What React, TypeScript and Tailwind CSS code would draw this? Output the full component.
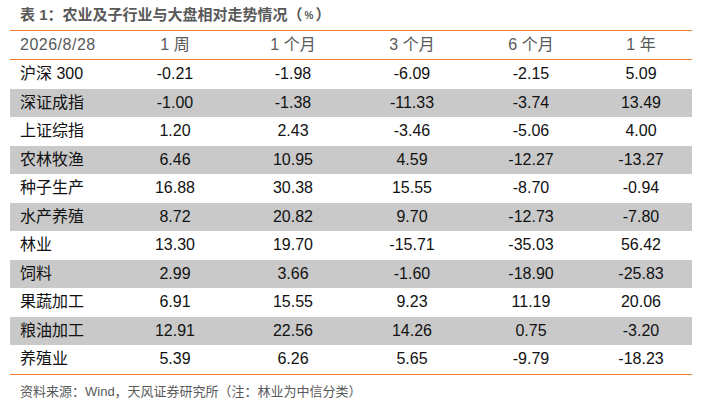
import React from "react";

const columns = ["1 周", "1 个月", "3 个月", "6 个月", "1 年"];

const rows: { name: string; values: string[] }[] = [
  { name: "沪深 300", values: ["-0.21", "-1.98", "-6.09", "-2.15", "5.09"] },
  { name: "深证成指", values: ["-1.00", "-1.38", "-11.33", "-3.74", "13.49"] },
  { name: "上证综指", values: ["1.20", "2.43", "-3.46", "-5.06", "4.00"] },
  { name: "农林牧渔", values: ["6.46", "10.95", "4.59", "-12.27", "-13.27"] },
  { name: "种子生产", values: ["16.88", "30.38", "15.55", "-8.70", "-0.94"] },
  { name: "水产养殖", values: ["8.72", "20.82", "9.70", "-12.73", "-7.80"] },
  { name: "林业", values: ["13.30", "19.70", "-15.71", "-35.03", "56.42"] },
  { name: "饲料", values: ["2.99", "3.66", "-1.60", "-18.90", "-25.83"] },
  { name: "果蔬加工", values: ["6.91", "15.55", "9.23", "11.19", "20.06"] },
  { name: "粮油加工", values: ["12.91", "22.56", "14.26", "0.75", "-3.20"] },
  { name: "养殖业", values: ["5.39", "6.26", "5.65", "-9.79", "-18.23"] },
];

const grid = "grid grid-cols-[106px_118px_118px_120px_118px_102px]";

export default function App() {
  return (
    <div className="w-[707px] h-[407px] bg-white font-['Liberation_Sans','Noto_Sans_CJK_SC',sans-serif]">
      {/* title */}
      <div className="h-[30px] flex items-center pl-[20px] text-[15px] font-bold text-[#595959]">
        表 1：农业及子行业与大盘相对走势情况（<span className="px-[2px] text-[10px]">%</span>）
      </div>

      <div className="mx-[10px] w-[682px]">
        {/* header */}
        <div className={`${grid} h-[30px] items-center border-y border-[#ed7d31] text-[16px] text-[#595959]`}>
          <div className="pl-[10px] tracking-[0.5px]">2026/8/28</div>
          {columns.map((c) => (
            <div key={c} className="text-center">
              {c}
            </div>
          ))}
        </div>

        {/* body */}
        <div className="border-b border-[#ed7d31]">
          {rows.map((r, i) => (
            <div
              key={r.name}
              className={`${grid} h-[28.5px] items-center text-[16px] text-[#111111] ${i % 2 === 1 ? "bg-[#c9c9c9]" : "bg-white"}`}
            >
              <div className="pl-[10px]">{r.name}</div>
              {r.values.map((v, j) => (
                <div key={j} className="text-center">
                  {v}
                </div>
              ))}
            </div>
          ))}
        </div>
      </div>

      {/* source */}
      <div className="pl-[20px] pt-[7px] text-[13px] text-[#595959]">
        资料来源：Wind，天风证券研究所（注：林业为中信分类）
      </div>
    </div>
  );
}
